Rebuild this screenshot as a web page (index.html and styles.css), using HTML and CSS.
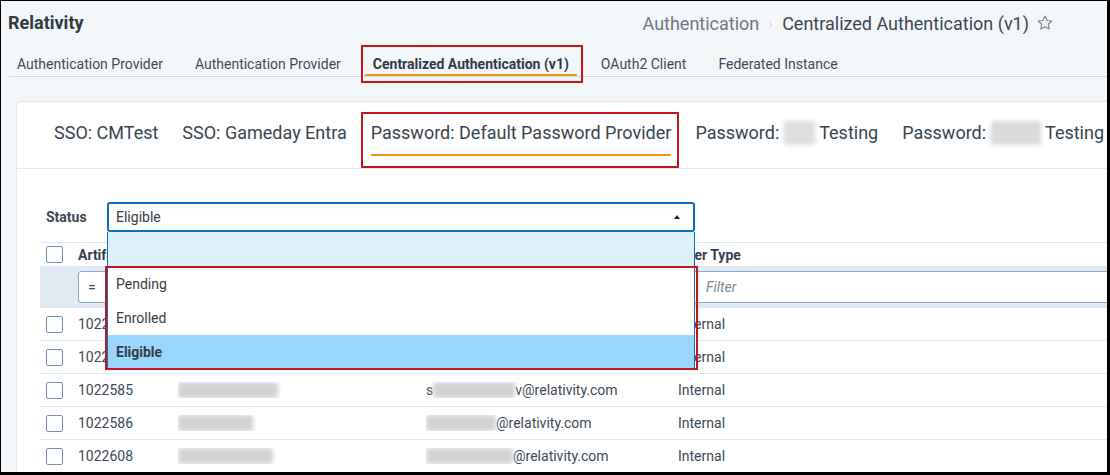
FILE: index.html
```html
<!DOCTYPE html>
<html lang="en">
<head>
<meta charset="utf-8">
<title>Centralized Authentication (v1)</title>
<link rel="stylesheet" href="styles.css">
</head>
<body>
<div class="frame">
  <header class="topbar">
    <div class="brand">Relativity</div>
    <div class="crumbs">
      <span class="crumb-parent">Authentication</span>
      <span class="crumb-sep">›</span>
      <span class="crumb-current">Centralized Authentication (v1)</span>
      <svg class="star" width="18" height="18" viewBox="0 0 24 24" aria-hidden="true"><path d="M12 2.8l2.75 5.8 6.3.75-4.65 4.35 1.2 6.25L12 16.85l-5.6 3.1 1.2-6.25L2.95 9.35l6.3-.75z" fill="none" stroke="#7b838c" stroke-width="1.5" stroke-linejoin="round"/></svg>
    </div>
  </header>

  <nav class="tabs">
    <span class="tab">Authentication Provider</span>
    <span class="tab">Authentication Provider</span>
    <span class="tab active">Centralized Authentication (v1)</span>
    <span class="tab">OAuth2 Client</span>
    <span class="tab">Federated Instance</span>
  </nav>

  <section class="card">
    <div class="subtabs">
      <span class="subtab">SSO: CMTest</span>
      <span class="subtab">SSO: Gameday Entra</span>
      <span class="subtab active">Password: Default Password Provider</span>
      <span class="subtab">Password:&nbsp;<span class="blur blur-tab1"></span>&nbsp;Testing</span>
      <span class="subtab">Password:&nbsp;<span class="blur blur-tab2"></span>&nbsp;Testing</span>
    </div>

    <div class="card-body">
      <div class="status-row">
        <span class="status-label">Status</span>
        <div class="select-wrap">
          <div class="select"><span>Eligible</span><span class="caret"></span></div>
          <div class="listbox">
            <div class="opt opt-empty"></div>
            <div class="opt-group">
              <div class="opt">Pending</div>
              <div class="opt">Enrolled</div>
              <div class="opt selected">Eligible</div>
            </div>
          </div>
        </div>
      </div>

      <div class="table">
        <div class="row row-head">
          <span class="cell"><span class="cb"></span></span>
          <span class="cell">Artifact ID</span>
          <span class="cell">Name</span>
          <span class="cell">Email Address</span>
          <span class="cell">User Type</span>
        </div>
        <div class="row row-filter">
          <span class="cell"></span>
          <span class="cell"><span class="finput finput-eq">=</span></span>
          <span class="cell"><span class="finput"></span></span>
          <span class="cell"><span class="finput"></span></span>
          <span class="cell"><span class="finput finput-wide"><svg class="ficon" width="14" height="14" viewBox="0 0 14 14" aria-hidden="true"><circle cx="6" cy="6" r="4.2" fill="none" stroke="#6e7a86" stroke-width="1.4"/><path d="M9 9l3.5 3.5" stroke="#6e7a86" stroke-width="1.4"/></svg><span class="placeholder">Filter</span></span></span>
        </div>
        <div class="row row-data">
          <span class="cell"><span class="cb"></span></span>
          <span class="cell">1022583</span>
          <span class="cell"></span>
          <span class="cell"></span>
          <span class="cell">Internal</span>
        </div>
        <div class="row row-data">
          <span class="cell"><span class="cb"></span></span>
          <span class="cell">1022584</span>
          <span class="cell"></span>
          <span class="cell"></span>
          <span class="cell">Internal</span>
        </div>
        <div class="row row-data">
          <span class="cell"><span class="cb"></span></span>
          <span class="cell">1022585</span>
          <span class="cell"><span class="blur blur-n1"></span></span>
          <span class="cell">s<span class="blur blur-e1"></span>v@relativity.com</span>
          <span class="cell">Internal</span>
        </div>
        <div class="row row-data">
          <span class="cell"><span class="cb"></span></span>
          <span class="cell">1022586</span>
          <span class="cell"><span class="blur blur-n2"></span></span>
          <span class="cell"><span class="blur blur-e2"></span>@relativity.com</span>
          <span class="cell">Internal</span>
        </div>
        <div class="row row-data">
          <span class="cell"><span class="cb"></span></span>
          <span class="cell">1022608</span>
          <span class="cell"><span class="blur blur-n3"></span></span>
          <span class="cell"><span class="blur blur-e3"></span>@relativity.com</span>
          <span class="cell">Internal</span>
        </div>
      </div>
    </div>
  </section>
</div>
</body>
</html>
```

FILE: styles.css
```css
html, body {
  margin: 0;
  padding: 0;
  background: #000;
}

.frame {
  width: 1110px;
  height: 475px;
  box-sizing: border-box;
  border-style: solid;
  border-color: #000;
  border-width: 1px 3px 3px 1px;
  background: #f3f7fa;
  overflow: hidden;
  font-family: Roboto, "Liberation Sans", Arial, sans-serif;
  color: #3b4956;
}

/* ---------- top bar ---------- */
.topbar {
  height: 44px;
  box-sizing: border-box;
  display: flex;
  align-items: center;
  justify-content: space-between;
  padding: 0 53px 2px 7px;
}

.brand {
  font-size: 18px;
  font-weight: 700;
  color: #2f3a45;
}

.crumbs {
  display: flex;
  align-items: center;
  font-size: 18px;
  padding-top: 2px;
}

.crumb-parent {
  color: #6f7780;
}

.crumb-sep {
  margin: 0 9px;
  color: #d3d8dd;
  font-size: 16px;
}

.crumb-current {
  color: #3c4651;
}

.star {
  margin-left: 7px;
}

/* ---------- primary tabs ---------- */
.tabs {
  display: flex;
  gap: 16px;
  margin-left: 8px;
  border-bottom: 1px solid #c9d9e9;
  white-space: nowrap;
}

.tab {
  padding: 11px 8px 2px;
  font-size: 14px;
  line-height: 16px;
  border-bottom: 2px solid transparent;
  color: #3d4b59;
}

.tab.active {
  position: relative;
  font-weight: 700;
  color: #2d3a47;
  border-bottom-color: #f39419;
}

.tab.active::after {
  content: "";
  position: absolute;
  left: -4px;
  right: -6px;
  top: 0;
  bottom: -9px;
  border: 2px solid #c4161c;
}

/* ---------- card ---------- */
.card {
  margin: 24px -60px 0 15px;
  background: #fff;
  border: 1px solid #e1e7ed;
  border-radius: 4px;
  height: 400px;
}

.subtabs {
  display: flex;
  gap: 24px;
  padding: 21px 0 12px 37px;
  border-bottom: 1px solid #e4e9ef;
  font-size: 18px;
  line-height: 20px;
  white-space: nowrap;
}

.subtab {
  display: flex;
  align-items: center;
  height: 20px;
  padding-bottom: 11px;
  border-bottom: 2px solid transparent;
  color: #38454f;
}

.subtab.active {
  position: relative;
  border-bottom-color: #f39419;
}

.subtab.active::after {
  content: "";
  position: absolute;
  left: -10px;
  right: -8px;
  top: -11px;
  bottom: -14px;
  border: 2px solid #c4161c;
}

.blur {
  display: inline-block;
  height: 16px;
  background: #d0d2d4;
  filter: blur(2.2px);
  vertical-align: middle;
  border-radius: 2px;
}

.blur-tab1 { width: 31px; height: 24px; background: #dcdedf; }
.blur-tab2 { width: 50px; height: 24px; background: #d8dadc; }
.blur-n1 { width: 100px; }
.blur-n2 { width: 75px; }
.blur-n3 { width: 95px; }
.blur-e1 { width: 82px; }
.blur-e2 { width: 70px; }
.blur-e3 { width: 87px; }

.card-body {
  padding: 33px 0 0 23px;
}

/* ---------- status select ---------- */
.status-row {
  display: flex;
  align-items: center;
  padding-left: 6px;
}

.status-label {
  width: 61px;
  font-size: 14px;
  font-weight: 700;
  color: #3a4754;
}

.select-wrap {
  position: relative;
  width: 588px;
}

.select {
  height: 30px;
  box-sizing: border-box;
  border: 2px solid #0b6fc0;
  border-radius: 3px;
  display: flex;
  align-items: center;
  justify-content: space-between;
  padding: 0 13px 0 7px;
  font-size: 14px;
  color: #333d47;
  background: #fff;
}

.caret {
  width: 0;
  height: 0;
  border-left: 3.5px solid transparent;
  border-right: 3.5px solid transparent;
  border-bottom: 4px solid #1e2329;
}

.listbox {
  position: absolute;
  top: 100%;
  left: 0;
  width: 100%;
  box-sizing: border-box;
  border-left: 1px solid #0b6fc0;
  border-right: 1px solid #0b6fc0;
  z-index: 5;
  background: #fff;
}

.opt {
  height: 34px;
  box-sizing: border-box;
  padding-left: 8px;
  display: flex;
  align-items: center;
  font-size: 14px;
  color: #333d47;
  background: #fff;
}

.opt-empty {
  height: 35px;
  background: #dcf1f9;
}

.opt.selected {
  background: #9ad7fd;
  font-weight: 700;
}

.opt-group {
  position: relative;
}

.opt-group::after {
  content: "";
  position: absolute;
  left: -3px;
  right: -4px;
  top: -1px;
  bottom: -1px;
  border: 2px solid #c4161c;
}

/* ---------- table ---------- */
.table {
  margin-top: 10px;
  border-top: 1px solid #dfe6ee;
}

.row {
  display: grid;
  grid-template-columns: 38px 100px 248px 252px 1fr;
  align-items: center;
  font-size: 14px;
  white-space: nowrap;
}

.cell {
  display: flex;
  align-items: center;
  overflow: hidden;
}

.row-head {
  height: 23px;
  font-weight: 700;
  color: #33414e;
}

.row-filter {
  height: 42px;
  background: #e1e9f2;
  align-items: start;
  padding-top: 5px;
  box-sizing: border-box;
}

.finput {
  flex: 1;
  height: 32px;
  box-sizing: border-box;
  border: 1px solid #8ea7c3;
  border-radius: 3px;
  background: #fff;
  margin-right: 8px;
  display: flex;
  align-items: center;
  color: #3b4956;
}

.finput-eq {
  padding-left: 9px;
}

.finput-wide {
  margin-left: -8px;
  margin-right: 0;
  padding-left: 9px;
}

.ficon {
  margin-right: 12px;
}

.placeholder {
  font-style: italic;
  color: #7b8793;
}

.row-data {
  height: 33px;
  box-sizing: border-box;
  border-bottom: 1px solid #dfe7ef;
  color: #3d4a57;
}

.cb {
  width: 17px;
  height: 17px;
  box-sizing: border-box;
  border: 1.5px solid #7390b4;
  border-radius: 2px;
  background: #fff;
  margin-left: 6px;
}
```
